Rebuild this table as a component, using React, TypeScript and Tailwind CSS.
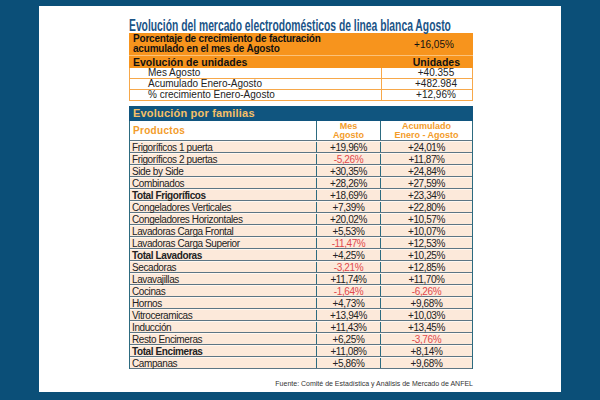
import React from 'react'

type Row = { name: string; mes: string; acum: string; bold?: boolean }

const rows: Row[] = [
  { name: 'Frigoríficos 1 puerta', mes: '+19,96%', acum: '+24,01%' },
  { name: 'Frigoríficos 2 puertas', mes: '-5,26%', acum: '+11,87%' },
  { name: 'Side by Side', mes: '+30,35%', acum: '+24,84%' },
  { name: 'Combinados', mes: '+28,26%', acum: '+27,59%' },
  { name: 'Total Frigoríficos', mes: '+18,69%', acum: '+23,34%', bold: true },
  { name: 'Congeladores Verticales', mes: '+7,39%', acum: '+22,80%' },
  { name: 'Congeladores Horizontales', mes: '+20,02%', acum: '+10,57%' },
  { name: 'Lavadoras Carga Frontal', mes: '+5,53%', acum: '+10,07%' },
  { name: 'Lavadoras Carga Superior', mes: '-11,47%', acum: '+12,53%' },
  { name: 'Total Lavadoras', mes: '+4,25%', acum: '+10,25%', bold: true },
  { name: 'Secadoras', mes: '-3,21%', acum: '+12,85%' },
  { name: 'Lavavajillas', mes: '+11,74%', acum: '+11,70%' },
  { name: 'Cocinas', mes: '-1,64%', acum: '-6,26%' },
  { name: 'Hornos', mes: '+4,73%', acum: '+9,68%' },
  { name: 'Vitroceramicas', mes: '+13,94%', acum: '+10,03%' },
  { name: 'Inducción', mes: '+11,43%', acum: '+13,45%' },
  { name: 'Resto Encimeras', mes: '+6,25%', acum: '-3,76%' },
  { name: 'Total Encimeras', mes: '+11,08%', acum: '+8,14%', bold: true },
  { name: 'Campanas', mes: '+5,86%', acum: '+9,68%' },
]

const unidades = [
  ['Mes Agosto', '+40.355'],
  ['Acumulado Enero-Agosto', '+482.984'],
  ['% crecimiento Enero-Agosto', '+12,96%'],
]

const val = (v: string) => (v.startsWith('-') ? 'text-[#e0484c]' : 'text-[#222]')

export default function App() {
  return (
    <div className="w-[600px] h-[400px] bg-[#0b4f78] pt-[6px] px-[39px] font-['Liberation_Sans',Arial,sans-serif]">
      <div className="bg-white h-[386px] pl-[90px] pr-[88px] flex flex-col">
        <div className="h-[27px] pt-[8px]">
          <h1 className="inline-block origin-left scale-x-[0.645] leading-[17px] text-[16px] font-bold text-[#1b5487] whitespace-nowrap">
            Evolución del mercado electrodomésticos de linea blanca Agosto
          </h1>
        </div>

        {/* orange summary */}
        <div className="bg-[#f7941d] text-[#111] text-[10px]">
          <div className="flex h-[22px] items-center">
            <div className="w-[252px] pl-[4px] font-bold leading-[10px] tracking-[-0.2px]">
              Porcentaje de crecimiento de facturación
              <br />
              acumulado en el mes de Agosto
            </div>
            <div className="flex-1 text-center pl-[14px]">+16,05%</div>
          </div>
          <div className="flex h-[13px] items-center border-t border-[#fbc27a] font-bold leading-[11px]">
            <div className="w-[252px] pl-[4px] text-[10.5px]">Evolución de unidades</div>
            <div className="flex-1 text-right pr-[13px] text-[10.5px]">Unidades</div>
          </div>
        </div>
        <div className="border-x border-[#f7a84a] text-[10px] text-[#222]">
          {unidades.map(([k, v]) => (
            <div key={k} className="flex h-[11px] leading-[10px] border-b border-[#f7a84a]">
              <div className="w-[252px] pl-[18px] border-r border-[#f7a84a]">{k}</div>
              <div className="flex-1 text-center pl-[18px]">{v}</div>
            </div>
          ))}
        </div>

        {/* familias table */}
        <div className="mt-[5px] bg-[#10557f] h-[15px] leading-[15px] pl-[4px] text-[11px] font-bold text-[#f6c067] tracking-[0.2px]">
          Evolución por familias
        </div>
        <div className="border-x border-[#2d6b80]">
          <div className="flex h-[20px] border-b border-[#5c7584] text-[#f39c2a] font-bold">
            <div className="w-[187px] pl-[3px] flex items-center text-[10px] tracking-[0.3px] border-r border-[#2d6b80]">
              Productos
            </div>
            <div className="w-[64px] flex flex-col items-center justify-center text-[9px] leading-[9px] border-r border-[#2d6b80]">
              <span>Mes</span>
              <span>Agosto</span>
            </div>
            <div className="flex-1 flex flex-col items-center justify-center text-[9px] leading-[9px]">
              <span>Acumulado</span>
              <span>Enero - Agosto</span>
            </div>
          </div>
          {rows.map((r) => (
            <div
              key={r.name}
              className="flex h-[12px] leading-[11px] text-[10px] tracking-[-0.4px] bg-[#fce9da] border-t border-[#fff7f0] border-b border-b-[#5c7584]"
            >
              <div className={`w-[187px] pl-[2px] border-r border-[#2d6b80] text-[#222] ${r.bold ? 'font-bold' : ''}`}>
                {r.name}
              </div>
              <div className={`w-[64px] text-center border-r border-[#2d6b80] ${val(r.mes)}`}>{r.mes}</div>
              <div className={`flex-1 text-center ${val(r.acum)}`}>{r.acum}</div>
            </div>
          ))}
        </div>
        <div className="mt-[10px] text-right text-[7px] text-[#333] leading-[10px]">
          Fuente: Comité de Estadística y Análisis de Mercado de ANFEL
        </div>
      </div>
    </div>
  )
}
